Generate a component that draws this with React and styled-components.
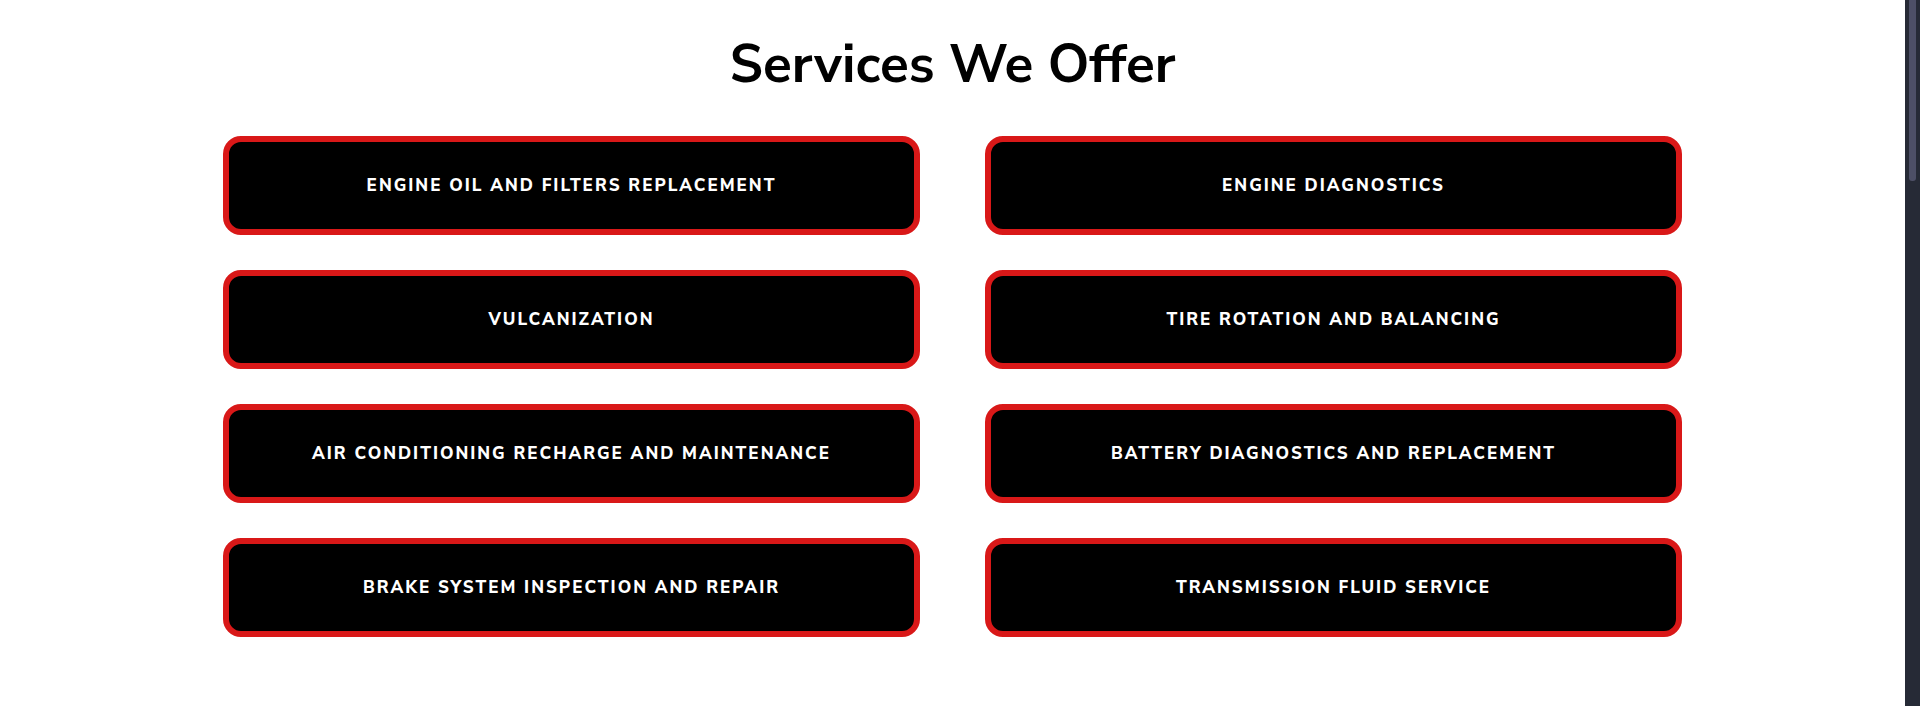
import React from "react";
import styled, { createGlobalStyle } from "styled-components";

const GlobalStyle = createGlobalStyle`
  *, *::before, *::after { box-sizing: border-box; }
  body {
    margin: 0;
    background: #fff;
    color: #000;
    font-family: "Nunito Sans", Nunito, Lato, sans-serif;
  }
`;

const Page = styled.div`
  display: flex;
  min-height: 100vh;
`;

const Content = styled.main`
  flex: 1;
  min-width: 0;
  padding: 32px 24px;
`;

const Title = styled.h2`
  margin: 0 0 38px;
  font-size: 53px;
  line-height: 66px;
  font-weight: 700;
  text-align: center;
`;

const ServiceGrid = styled.div`
  display: grid;
  grid-template-columns: repeat(auto-fit, minmax(min(100%, 520px), 1fr));
  gap: 35px 65px;
  max-width: 1459px;
  margin: 0 auto;
`;

const ServiceButton = styled.button`
  min-height: 99px;
  padding: 24px;
  border: 6px solid #d91818;
  border-radius: 18px;
  background: #000;
  color: #fff;
  font-family: inherit;
  font-size: 17px;
  line-height: 24px;
  font-weight: 800;
  letter-spacing: 2px;
  text-transform: uppercase;
  cursor: pointer;
`;

const ScrollTrack = styled.div`
  flex: 0 0 15px;
  padding: 0 4px;
  background: #262a36;
`;

const ScrollThumb = styled.div`
  height: 181px;
  border-radius: 0 0 3px 3px;
  background: #4d4f66;
`;

const services = [
  "Engine Oil and Filters Replacement",
  "Engine Diagnostics",
  "Vulcanization",
  "Tire Rotation and Balancing",
  "Air Conditioning Recharge and Maintenance",
  "Battery Diagnostics and Replacement",
  "Brake System Inspection and Repair",
  "Transmission Fluid Service",
];

export default function App() {
  return (
    <>
      <GlobalStyle />
      <Page>
        <Content>
          <Title>Services We Offer</Title>
          <ServiceGrid>
            {services.map((name) => (
              <ServiceButton type="button" key={name}>{name}</ServiceButton>
            ))}
          </ServiceGrid>
        </Content>
        <ScrollTrack aria-hidden="true">
          <ScrollThumb />
        </ScrollTrack>
      </Page>
    </>
  );
}
